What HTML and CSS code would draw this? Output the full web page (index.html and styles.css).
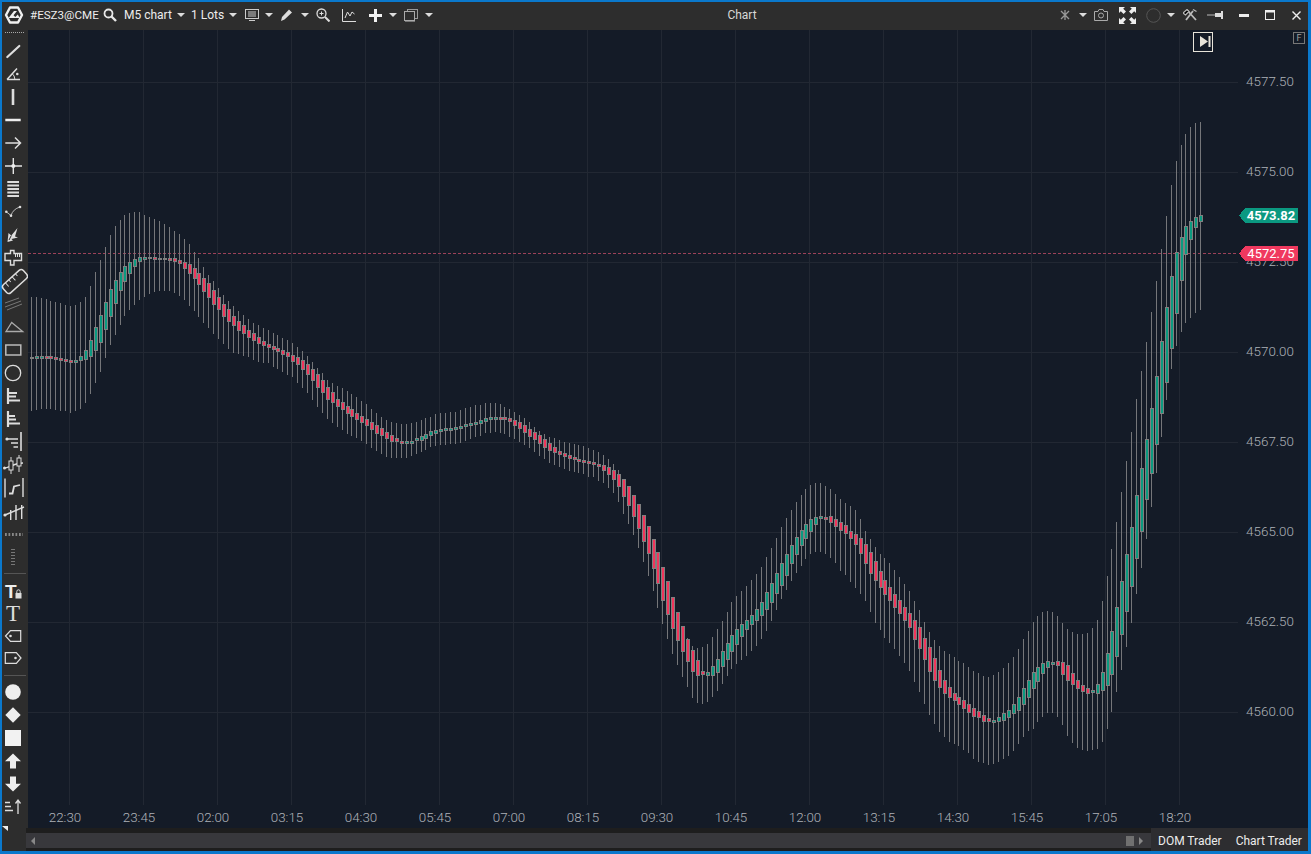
FILE: index.html
```html
<!DOCTYPE html>
<html lang="en">
<head>
  <meta charset="UTF-8">
  <title>Chart</title>
  <link rel="stylesheet" href="styles.css">
</head>
<body>
<div class="window">

  <!-- Top bar -->
  <header class="topbar">
    <div class="top-left">
      <svg class="ic" width="20" height="20" viewBox="0 0 20 20"><path d="M6 2.500h8L18 10l-4 7.500H6L2 10z" fill="none" stroke="#f0f0f0" stroke-width="2.400" stroke-linejoin="round"/><path d="M4.500 13l5.500-7h3l-3.500 4.300 1.800 1.700 2.500-2.500 2 3.500z" fill="#f0f0f0"/></svg>
      <span class="tb-text tb-symbol">#ESZ3@CME</span>
      <svg class="ic" width="14" height="14" viewBox="0 0 14 14"><circle cx="5.500" cy="5.500" r="4" fill="none" stroke="#e8e8e8" stroke-width="1.800"/><path d="M8.500 8.500l4.500 4.500" stroke="#e8e8e8" stroke-width="2.400"/></svg>
      <span class="tb-text">M5 chart</span>
      <i class="caret"></i>
      <span class="tb-text">1 Lots</span>
      <i class="caret"></i>
      <svg class="ic" width="14" height="13" viewBox="0 0 14 13"><rect x="0.500" y="0.500" width="13" height="9" fill="none" stroke="#ccc"/><path d="M3 3h8M3 5h8M3 7h8M4 11.500h6" stroke="#ccc"/></svg>
      <i class="caret"></i>
      <svg class="ic" width="14" height="14" viewBox="0 0 14 14"><path d="M1 13l1-4 7-7.500 3 3-7.500 7z" fill="#ddd"/><path d="M9.800 1l3 3" stroke="#2d2d2d"/></svg>
      <i class="caret"></i>
      <svg class="ic" width="14" height="14" viewBox="0 0 14 14"><circle cx="5.500" cy="5.500" r="4.500" fill="none" stroke="#ddd" stroke-width="1.300"/><path d="M3.500 5.500h4M5.500 3.500v4" stroke="#ddd"/><path d="M9 9l4.500 4.500" stroke="#ddd" stroke-width="2"/></svg>
      <svg class="ic" width="14" height="13" viewBox="0 0 14 13"><path d="M.5 0v12.500H14" fill="none" stroke="#ddd"/><path d="M3 9l2.500-6 2.500 4 2-4 2.500 2" fill="none" stroke="#ddd"/></svg>
      <svg class="ic" width="13" height="13" viewBox="0 0 13 13"><path d="M6.500 0v13M0 6.500h13" stroke="#f2f2f2" stroke-width="3"/></svg>
      <i class="caret"></i>
      <svg class="ic" width="14" height="13" viewBox="0 0 14 13"><rect x="3.500" y="0.500" width="10" height="9" fill="none" stroke="#999"/><rect x="0.500" y="2.500" width="10" height="9" fill="#2d2d2d" stroke="#aaa"/><path d="M1 12.500h10" stroke="#777"/></svg>
      <i class="caret"></i>
    </div>
    <div class="tb-title">Chart</div>
    <div class="top-right">
      <svg class="ic" width="12" height="12" viewBox="0 0 12 12"><path d="M2 2l8 8M10 2l-8 8M6 1v10" stroke="#999" stroke-width="1.300"/></svg>
      <i class="caret"></i>
      <svg class="ic" width="14" height="12" viewBox="0 0 14 12"><path d="M.5 2.500h3.500l1-2h4l1 2h3.500v9H.5z" fill="none" stroke="#aaa"/><circle cx="7" cy="6.500" r="2.500" fill="none" stroke="#aaa"/></svg>
      <svg class="ic" width="17" height="17" viewBox="0 0 17 17"><path d="M0 0h6L4.200 1.800 7 4.600 4.600 7 1.800 4.200 0 6zM17 0v6l-1.800-1.800L12.400 7 10 4.600l2.800-2.800L11 0zM0 17v-6l1.800 1.800L4.600 10 7 12.400l-2.800 2.800L6 17zM17 17h-6l1.800-1.800L10 12.400 12.400 10l2.800 2.800L17 11z" fill="#eee"/></svg>
      <svg class="ic" width="15" height="15" viewBox="0 0 15 15"><circle cx="7.500" cy="7.500" r="6.800" fill="none" stroke="#555"/></svg>
      <i class="caret"></i>
      <svg class="ic" width="14" height="12" viewBox="0 0 14 12"><path d="M3 11L10 2M4 1l9 10" stroke="#bbb" stroke-width="1.800"/><path d="M0 4l4-3.500 2 2-3.500 3.500zM10 .5l3.500 2" stroke="#bbb" stroke-width="1.200"/></svg>
      <svg class="ic" width="16" height="8" viewBox="0 0 16 8"><path d="M0 4h9" stroke="#bbb"/><path d="M8 2h6V0h2v8h-2V6H8z" fill="#ddd"/></svg>
      <svg class="ic" width="10" height="3" viewBox="0 0 10 3"><rect width="10" height="3" fill="#eee"/></svg>
      <svg class="ic" width="10" height="10" viewBox="0 0 10 10"><rect x="0.500" y="1" width="9" height="8.500" fill="none" stroke="#eee"/><rect width="10" height="2.500" fill="#eee"/></svg>
      <svg class="ic ic-close" width="9" height="9" viewBox="0 0 9 9"><path d="M.5.500l8 8M8.500.500l-8 8" stroke="#eee" stroke-width="1.400"/></svg>
    </div>
  </header>

  <div class="main">
    <!-- Drawing tools -->
    <aside class="tools">
      <div class="grip-top"></div>
      <div class="tool"><svg viewBox="0 0 22 22"><path d="M5.300 17L17.300 6" stroke="#ddd" stroke-width="2.200" stroke-linecap="round"/></svg></div>
      <div class="tool"><svg viewBox="0 0 22 22"><path d="M5 16.500h13M5 16.500L15 5.500" fill="none" stroke="#ddd" stroke-width="1.500"/><path d="M10.500 11q2 1.500 2.300 5" fill="none" stroke="#ddd"/><circle cx="15.300" cy="11" r="1.300" fill="#ddd"/></svg></div>
      <div class="tool"><svg viewBox="0 0 22 22"><path d="M11 3v16" stroke="#ddd" stroke-width="2.600"/></svg></div>
      <div class="tool"><svg viewBox="0 0 22 22"><path d="M3.300 11h15.400" stroke="#eee" stroke-width="2.500"/></svg></div>
      <div class="tool"><svg viewBox="0 0 22 22"><path d="M3.300 11h15M13 5.500l5.500 5.500-5.500 5.500" fill="none" stroke="#ddd" stroke-width="1.500"/></svg></div>
      <div class="tool"><svg viewBox="0 0 22 22"><path d="M3 11h17M11.300 3v16" stroke="#e4e4e4" stroke-width="1.400"/><circle cx="11.300" cy="11" r="2" fill="#eee"/></svg></div>
      <div class="tool"><svg viewBox="0 0 22 22"><path d="M5.300 4h11.700M5.300 7.500h11.700M5.300 11h11.700M5.300 14.500h11.700M5.300 18h11.700" stroke="#ddd" stroke-width="2"/></svg></div>
      <div class="tool"><svg viewBox="0 0 22 22"><path d="M4.500 11l4.500 3.500Q11 8 18 6" fill="none" stroke="#bbb"/><circle cx="4.300" cy="10.700" r="1.300" fill="#ddd"/><circle cx="9" cy="14.700" r="1.300" fill="#ddd"/><circle cx="18" cy="6" r="1.300" fill="#ddd"/></svg></div>
      <div class="tool"><svg viewBox="0 0 22 22"><path d="M5.500 18l1-9 2.800 2.500 6.200-7.500-2.500 8.500 3 1-6.500 1.500 1.500 1.500z" fill="#ddd"/><path d="M9.300 11.500L7 16" stroke="#2d2d2d"/></svg></div>
      <div class="tool"><svg viewBox="0 0 22 22"><path d="M3 6.500h5.500V3.500h3.500v3h7.500v7h-7.500v4.500H8.500v-4.500H3z" fill="none" stroke="#ddd" stroke-width="1.400"/><path d="M13.500 7v3M15.500 7v3M17.500 7v3" stroke="#ddd"/></svg></div>
      <div class="tool"><svg viewBox="0 0 22 22"><g transform="rotate(-42 13 11.500)"><rect x="-0.500" y="6" width="27" height="11" rx="3" fill="none" stroke="#ddd" stroke-width="1.500"/><path d="M5 6v5M9.500 6v3M14 6v5M18.500 6v3" stroke="#ddd"/></g></svg></div>
      <div class="tool"><svg viewBox="0 0 22 22"><path d="M3 10l14-5M3 14l16-6M5 17l15-6" stroke="#777"/></svg></div>
      <div class="tool"><svg viewBox="0 0 22 22"><path d="M4 15.500L9.700 6.500 20.700 15.500z" fill="none" stroke="#aaa" stroke-width="1.300"/></svg></div>
      <div class="tool"><svg viewBox="0 0 22 22"><rect x="3.800" y="6" width="15" height="10" fill="none" stroke="#bbb" stroke-width="1.500"/></svg></div>
      <div class="tool"><svg viewBox="0 0 22 22"><circle cx="11" cy="11" r="7.700" fill="none" stroke="#ddd" stroke-width="1.300"/></svg></div>
      <div class="tool"><svg viewBox="0 0 22 22"><path d="M6 3v16" stroke="#ddd" stroke-width="2.200"/><path d="M7 8h8M7 11.500h7M7 15.500h11" stroke="#ddd" stroke-width="2"/></svg></div>
      <div class="tool"><svg viewBox="0 0 22 22"><path d="M6 3v16" stroke="#ddd" stroke-width="2.200"/><path d="M7 8h6M7 11.500h7M7 15.500h11" stroke="#ddd" stroke-width="2"/></svg></div>
      <div class="tool"><svg viewBox="0 0 22 22"><path d="M19 1v19" stroke="#ddd" stroke-width="1.600"/><path d="M4 8h12M9 12h7M11.500 16h4.500" stroke="#ddd" stroke-width="1.500"/><circle cx="5" cy="8" r="1.600" fill="#ddd"/></svg></div>
      <div class="tool"><svg viewBox="0 0 22 22"><path d="M2 14c5 0 10-5 19-5" fill="none" stroke="#ddd" stroke-width="1.400"/><path d="M9 3v17M17 1v17" stroke="#ddd"/><rect x="7" y="7" width="4" height="9" fill="#2d2d2d" stroke="#ddd"/><rect x="15" y="4" width="4" height="8" fill="#2d2d2d" stroke="#ddd"/><circle cx="2.500" cy="14" r="1.500" fill="#ddd"/></svg></div>
      <div class="tool"><svg viewBox="0 0 22 22"><path d="M3 1.500v19M21 1v19" stroke="#ddd" stroke-width="1.400"/><path d="M7 16.500h3.500l1.500-7 6-1.500" fill="none" stroke="#ddd" stroke-width="1.800"/></svg></div>
      <div class="tool"><svg viewBox="0 0 22 22"><path d="M3 15l19-8" stroke="#ddd" stroke-width="1.400"/><path d="M8.700 10v10M14 5v15M19.700 5v14" stroke="#ddd" stroke-width="1.400"/><circle cx="3" cy="15" r="1.600" fill="#ddd"/></svg></div>
      <div class="grip-h"><span></span></div>
      <div class="grip-v"><span></span></div>
      <div class="tool-sep tool-sep-a"></div>
      <div class="tool tool-narrow"><svg viewBox="0 0 22 22"><text x="3" y="18" class="icon-t-bold">T</text><rect x="13.500" y="13" width="6" height="5.500" fill="#ddd"/><path d="M14.800 13v-1.500a1.700 1.700 0 0 1 3.400 0V13" fill="none" stroke="#ddd"/></svg></div>
      <div class="tool tool-narrow"><svg viewBox="0 0 22 22"><text x="11" y="19" class="icon-t">T</text></svg></div>
      <div class="tool tool-narrow"><svg viewBox="0 0 22 22"><path d="M3.500 11l5-5.300h10.200v10.600H8.500z" fill="none" stroke="#ddd" stroke-width="1.200"/><circle cx="8.500" cy="11" r="1.300" fill="#ddd"/></svg></div>
      <div class="tool tool-narrow"><svg viewBox="0 0 22 22"><path d="M3.300 5.700h11l4.700 5.300-4.700 5.300h-11z" fill="none" stroke="#ddd" stroke-width="1.200"/><circle cx="13.500" cy="11" r="1.300" fill="#ddd"/></svg></div>
      <div class="tool-sep tool-sep-b"></div>
      <div class="tool"><svg viewBox="0 0 22 22"><circle cx="11" cy="11" r="7.800" fill="#eee"/></svg></div>
      <div class="tool"><svg viewBox="0 0 22 22"><path d="M11 3.300l7.700 7.700-7.700 7.700L3.300 11z" fill="#eee"/></svg></div>
      <div class="tool"><svg viewBox="0 0 22 22"><rect x="3" y="3" width="16" height="16" fill="#f2f2f2"/></svg></div>
      <div class="tool"><svg viewBox="0 0 22 22"><path d="M11 3.500l8 7.700h-5v7.300H8v-7.300H3z" fill="#eee"/></svg></div>
      <div class="tool"><svg viewBox="0 0 22 22"><path d="M11 18.500l8-7.700h-5V3.500H8v7.300H3z" fill="#eee"/></svg></div>
      <div class="tool"><svg viewBox="0 0 22 22"><path d="M3 6.500h5M3 10.500h6M3 14.500h8" stroke="#ddd" stroke-width="1.400"/><path d="M16 18V4.500M13.500 7.500L16 4l2.500 3.500" fill="none" stroke="#ddd" stroke-width="1.300"/></svg></div>
      <div class="tool-corner"></div>
    </aside>

    <div class="content">
      <!-- Chart -->
      <div class="chart" id="chart">
        <button class="end-btn"><svg width="12" height="12" viewBox="0 0 12 12"><path d="M1 0v11l8-5.500z" fill="#e8e4da"/><rect x="9.500" y="0" width="2" height="11" fill="#e8e4da"/></svg></button>
        <div class="f-btn">F</div>
      </div>

      <!-- Bottom bar -->
      <div class="bottombar">
        <div class="scroll">
          <div class="track">
            <i class="arrow-l"></i>
            <i class="thumb"></i>
            <i class="arrow-r"></i>
          </div>
        </div>
        <div class="traders">
          <span>DOM Trader</span>
          <span>Chart Trader</span>
        </div>
      </div>
    </div>
  </div>

</div>
<script src="script.js"></script>
</body>
</html>
```
FILE: styles.css
```css
* {
  box-sizing: border-box;
}

body {
  margin: 0;
  background-color: #0a78cc;
  font-family: Roboto, "Noto Sans", sans-serif;
  overflow: hidden;
}

.window {
  width: 1311px;
  height: 854px;
  padding: 2px 3px 3px 2px;
  background-color: #0a78cc;
  display: flex;
  flex-direction: column;
}

/* top bar */
.topbar {
  height: 28px;
  flex: none;
  padding-bottom: 2px;
  background-color: #2d2d2d;
  display: flex;
  align-items: center;
  color: #ececec;
  font-size: 12px;
}

.top-left, .top-right {
  display: grid;
  align-items: center;
  justify-items: center;
  flex: none;
}

.top-left {
  width: 431px;
  grid-template-columns: 24px 74px 20px 55px 12px 40px 12px 26px 8px 28px 8px 28px 24px 28px 8px 28px 8px;
}

.top-right {
  width: 257px;
  grid-template-columns: 28px 8px 28px 24px 28px 8px 30px 20px 38px 14px 31px;
}

.tb-text {
  justify-self: start;
  padding-left: 4px;
  white-space: nowrap;
}

.tb-symbol {
  font-size: 11.600px;
}

.tb-title {
  flex: 1;
  text-align: center;
  font-size: 12px;
  color: #d8d8d8;
}

.ic {
  display: block;
}

.ic-close {
  justify-self: end;
  margin-right: 7px;
}

.caret {
  width: 0;
  height: 0;
  border-left: 4px solid transparent;
  border-right: 4px solid transparent;
  border-top: 4px solid #dcdcdc;
}

/* main area */
.main {
  flex: 1;
  display: flex;
  min-height: 0;
}

.tools {
  width: 26px;
  flex: none;
  background-color: #2d2d2d;
  display: flex;
  flex-direction: column;
}

.grip-top {
  height: 8.5px;
  flex: none;
  margin: 1px 4px 0 3px;
  background-image: repeating-linear-gradient(90deg, #aaa 0 1px, transparent 1px 2px);
  background-size: 100% 1px;
  background-position: 0 1px;
  background-repeat: no-repeat;
}

.tool {
  width: 22px;
  height: 23px;
  flex: none;
  display: flex;
  align-items: center;
}

.tool svg {
  display: block;
  width: 22px;
  height: 22px;
  overflow: visible;
}

.tool-narrow {
  height: 22.5px;
}

.icon-t-bold {
  font-family: "Liberation Sans", sans-serif;
  font-weight: bold;
  font-size: 19px;
  fill: #eee;
}

.icon-t {
  font-family: "Liberation Serif", serif;
  font-size: 23px;
  fill: #ddd;
  text-anchor: middle;
}

.grip-h {
  height: 23px;
  display: flex;
  align-items: center;
  padding-left: 3px;
}

.grip-h span {
  width: 18px;
  height: 3px;
  background-image: linear-gradient(90deg, #888 60%, transparent 60%);
  background-size: 3.500px 3px;
}

.grip-v {
  height: 22px;
  display: flex;
  align-items: center;
  padding-left: 9px;
}

.grip-v span {
  width: 4px;
  height: 16px;
  background-image: linear-gradient(#777 50%, transparent 50%);
  background-size: 4px 3px;
}

.tool-sep {
  margin: 0 2px;
  position: relative;
}

.tool-sep::after {
  content: "";
  display: block;
  height: 1px;
  background-color: #555;
}

.tool-sep-a {
  height: 12px;
  padding-top: 5px;
}

.tool-sep-b {
  height: 11px;
  padding-top: 5px;
}

.tool-corner {
  width: 0;
  height: 0;
  margin-top: 7px;
  border-top: 5px solid #eee;
  border-left: 6px solid transparent;
}

.content {
  flex: 1;
  min-width: 0;
  display: flex;
  flex-direction: column;
}

.chart {
  height: 798px;
  flex: none;
  position: relative;
  background-color: #141b27;
}

.chart svg.plot {
  display: block;
  width: 1280px;
  height: 798px;
}

.axis-label {
  font-family: Roboto, sans-serif;
  font-weight: 300;
  font-size: 13.400px;
  fill: #aeb2b8;
}

.tag-label {
  font-family: Roboto, sans-serif;
  font-size: 13px;
  fill: #fff;
}

.tag-label.bold {
  font-weight: 700;
}

.end-btn {
  position: absolute;
  top: 2px;
  left: 1165px;
  width: 20px;
  height: 20px;
  padding: 3px 0 0 3px;
  background: none;
  border: 1px solid #e8e4da;
  display: block;
}

.f-btn {
  position: absolute;
  top: 2px;
  left: 1265px;
  width: 12px;
  height: 12px;
  border: 1px solid #777;
  color: #a0a0a0;
  font-size: 9px;
  line-height: 10px;
  text-align: center;
}

/* bottom bar */
.bottombar {
  flex: 1;
  margin-left: -2px;
  display: flex;
  background-color: #1e1e1e;
}

.scroll {
  flex: 1;
  padding: 5px 0 3px;
}

.track {
  height: 15px;
  background-color: #38383c;
  display: flex;
  align-items: center;
  padding: 0 8px 0 5px;
}

.arrow-l, .arrow-r {
  width: 0;
  height: 0;
  border-top: 4px solid transparent;
  border-bottom: 4px solid transparent;
}

.arrow-l {
  border-right: 4px solid #888;
}

.arrow-r {
  margin-left: 5px;
  border-left: 4px solid #888;
}

.thumb {
  width: 8px;
  height: 10px;
  margin-left: auto;
  background-color: #707070;
}

.traders {
  width: 157px;
  flex: none;
  background-color: #2d2d30;
  display: flex;
  align-items: center;
  gap: 14px;
  padding: 2px 0 0 7px;
  font-size: 12px;
  color: #ececec;
  white-space: nowrap;
}
```
FILE: script.js
```js
// x, close, wick top, wick bottom (screen px, read off the price scale)
const points = [
  [31,357,297,411],[35,356,297,410],[40,356,298,409],[45,357,299,409],[50,358,301,409],[55,359,302,410],
  [60,360,303,411],[65,361,305,411],[70,361,306,413],[75,360,305,411],[80,356,302,409],[85,350,297,403],
  [90,340,286,394],[95,327,272,383],[100,314,259,371],[105,301,246,357],[109,290,236,346],[114,281,227,336],
  [119,273,221,326],[124,266,215,317],[129,262,213,310],[134,259,212,305],[139,257,212,300],[144,257,215,297],
  [149,258,217,294],[154,258,219,292],[159,258,221,291],[164,258,224,291],[169,261,227,291],[174,262,231,293],
  [178,264,233,295],[183,268,238,299],[188,273,243,305],[193,278,251,310],[198,284,257,316],[203,291,266,323],
  [208,298,274,328],[213,305,281,334],[218,310,288,339],[223,317,295,344],[228,322,301,349],[233,326,306,353],
  [238,331,311,354],[243,334,315,356],[248,338,319,357],[252,341,323,360],[257,344,325,362],[262,346,328,363],
  [267,348,330,363],[272,350,333,367],[277,352,335,369],[282,355,338,372],[287,357,340,375],[292,361,343,377],
  [297,365,347,383],[302,370,351,388],[307,375,356,393],[312,381,362,400],[317,388,368,407],[322,393,373,413],
  [326,399,379,418],[331,402,383,422],[336,406,386,426],[341,409,388,430],[346,413,391,434],[351,416,394,436],
  [356,419,397,438],[361,422,401,441],[366,425,404,444],[371,429,409,448],[376,433,413,451],[381,436,417,454],
  [386,439,420,457],[391,442,422,458],[396,442,423,458],[400,443,424,458],[405,441,424,458],[410,441,423,456],
  [415,438,422,454],[420,436,420,452],[425,434,418,450],[430,431,417,447],[435,430,414,446],[440,429,413,445],
  [445,428,413,445],[450,428,412,444],[455,427,412,444],[460,426,410,443],[465,424,408,441],[470,423,407,439],
  [474,422,405,437],[479,420,405,436],[484,418,403,433],[489,417,403,433],[494,417,403,432],[499,418,404,433],
  [504,420,407,434],[509,422,409,437],[514,426,412,439],[519,429,415,442],[524,433,418,445],[529,436,422,448],
  [534,440,427,452],[539,444,431,456],[544,448,434,459],[548,451,437,463],[553,453,438,465],[558,455,440,467],
  [563,457,442,469],[568,459,443,471],[573,460,444,472],[578,461,445,473],[583,462,446,474],[588,464,448,477],
  [593,465,450,477],[598,467,452,481],[603,471,455,483],[608,475,459,488],[613,480,464,493],[618,487,470,502],
  [622,495,478,512],[627,504,487,522],[632,515,495,533],[637,527,504,546],[642,540,515,560],[647,553,527,574],
  [652,568,540,589],[657,583,553,606],[662,599,568,623],[667,614,583,638],[672,628,598,653],[677,641,613,665],
  [682,652,626,677],[687,662,638,687],[691,671,646,697],[696,676,648,703],[701,676,648,704],[706,673,645,703],
  [711,667,638,698],[716,660,630,692],[721,652,622,685],[726,644,613,677],[731,636,603,670],[736,629,596,664],
  [741,624,591,660],[746,620,586,656],[751,615,580,651],[756,609,574,646],[761,602,567,639],[765,594,559,633],
  [770,585,550,623],[775,575,540,612],[780,564,529,601],[785,555,519,591],[790,546,511,582],[795,538,503,574],
  [800,531,496,567],[805,524,489,560],[810,519,485,554],[815,517,483,552],[820,516,483,552],[825,519,486,554],
  [830,523,489,558],[835,526,494,563],[839,531,498,570],[844,534,502,574],[849,538,505,581],[854,544,509,587],
  [859,552,517,593],[864,562,530,599],[869,572,538,610],[874,581,546,622],[879,588,553,629],[884,595,558,637],
  [889,601,563,643],[894,608,569,648],[899,614,577,656],[904,621,584,663],[909,628,591,671],[913,638,599,680],
  [918,647,608,690],[923,658,620,702],[928,670,630,713],[933,680,639,723],[938,687,645,731],[943,693,650,736],
  [948,697,654,742],[953,700,657,744],[958,704,661,746],[963,708,663,750],[968,712,667,753],[973,716,671,759],
  [978,718,673,762],[983,722,676,763],[987,722,677,765],[992,721,676,764],[997,718,673,762],[1002,714,669,760],
  [1007,711,664,757],[1012,705,658,752],[1017,698,650,745],[1022,689,640,738],[1027,681,632,731],[1032,673,623,730],
  [1037,667,616,723],[1042,663,612,717],[1047,661,611,713],[1052,662,612,713],[1057,666,616,717],[1061,673,622,722],
  [1066,680,628,735],[1071,685,632,742],[1076,688,634,747],[1081,692,634,750],[1086,694,634,751],[1091,691,629,750],
  [1096,685,622,750],[1101,674,604,743],[1106,655,579,731],[1111,633,552,714],[1116,609,524,694],[1121,583,494,672],
  [1126,555,463,648],[1131,528,433,624],[1135,501,405,600],[1140,474,377,574],[1145,445,348,546],[1150,414,318,513],
  [1155,382,287,479],[1160,347,255,443],[1165,312,221,405],[1170,279,189,372],[1175,254,163,348],[1180,238,146,333],
  [1185,227,135,324],[1190,221,127,318],[1195,217,123,313],[1200,215,122,310]
];

const NS = 'http://www.w3.org/2000/svg';
const STEP = 4.935;
const parts = [];

// linear read between the points
function at(x, col) {
  if (x <= points[0][0]) return points[0][col];
  for (let i = 1; i < points.length; i++) {
    if (x <= points[i][0]) {
      const a = points[i - 1], b = points[i];
      return a[col] + (b[col] - a[col]) * (x - a[0]) / (b[0] - a[0]);
    }
  }
  return points[points.length - 1][col];
}

function rect(x, y, w, h, fill) {
  parts.push(`<rect x="${x}" y="${y}" width="${w}" height="${h}" fill="${fill}"/>`);
}

// grid
for (let y = 82; y <= 712; y += 90) rect(28, y, 1210, 1, '#222833');
for (let x = 69; x <= 1179; x += 74) rect(x, 30, 1, 775, '#222833');

// current price line
for (let x = 28; x < 1238; x += 5) rect(x, 253, 3, 1, '#9c4259');

// candles
const wick = '#757679', edge = '#7f7f7f', up = '#0c9a80', down = '#f0365c';
for (let i = 0; i <= 237; i++) {
  const raw = 30.7 + i * STEP;
  const x = Math.round(raw);
  const top = Math.round(at(raw, 2));
  const bottom = Math.round(at(raw, 3));
  const close = at(raw, 1);
  const open = at(raw - 2.2 * STEP, 1);
  const diff = Math.abs(open - close);
  const y1 = Math.round(Math.min(open, close));
  const h = diff < 0.8 ? 2 : Math.max(3, Math.round(diff));

  rect(x, top, 1, bottom - top, wick);
  rect(x - 1, y1, 4, h, edge);
  if (h > 2) rect(x, y1 + 1, 2, h - 2, close < open ? up : down);
}

// price scale
[4577.5, 4575, 4572.5, 4570, 4567.5, 4565, 4562.5, 4560].forEach((p, i) => {
  parts.push(`<text class="axis-label" x="1270" y="${86 + i * 90}" text-anchor="middle">${p.toFixed(2)}</text>`);
});

// time scale
['22:30','23:45','02:00','03:15','04:30','05:45','07:00','08:15','09:30','10:45','12:00','13:15','14:30','15:45','17:05','18:20']
  .forEach((t, i) => {
    parts.push(`<text class="axis-label" x="${65 + i * 74}" y="822" text-anchor="middle">${t}</text>`);
  });

// price tags
function tag(y, fill, label, cls) {
  parts.push(`<polygon points="1239,${y + 7.5} 1245,${y} 1298,${y} 1298,${y + 15} 1245,${y + 15}" fill="${fill}"/>`);
  parts.push(`<text class="tag-label ${cls}" x="1271" y="${y + 12}" text-anchor="middle">${label}</text>`);
}
tag(208, '#0b9981', '4573.82', 'bold');
tag(246, '#f0395f', '4572.75', '');

const svg = document.createElementNS(NS, 'svg');
svg.setAttribute('class', 'plot');
svg.setAttribute('viewBox', '28 30 1280 798');
svg.setAttribute('shape-rendering', 'crispEdges');
svg.innerHTML = parts.join('');
document.getElementById('chart').prepend(svg);
```
